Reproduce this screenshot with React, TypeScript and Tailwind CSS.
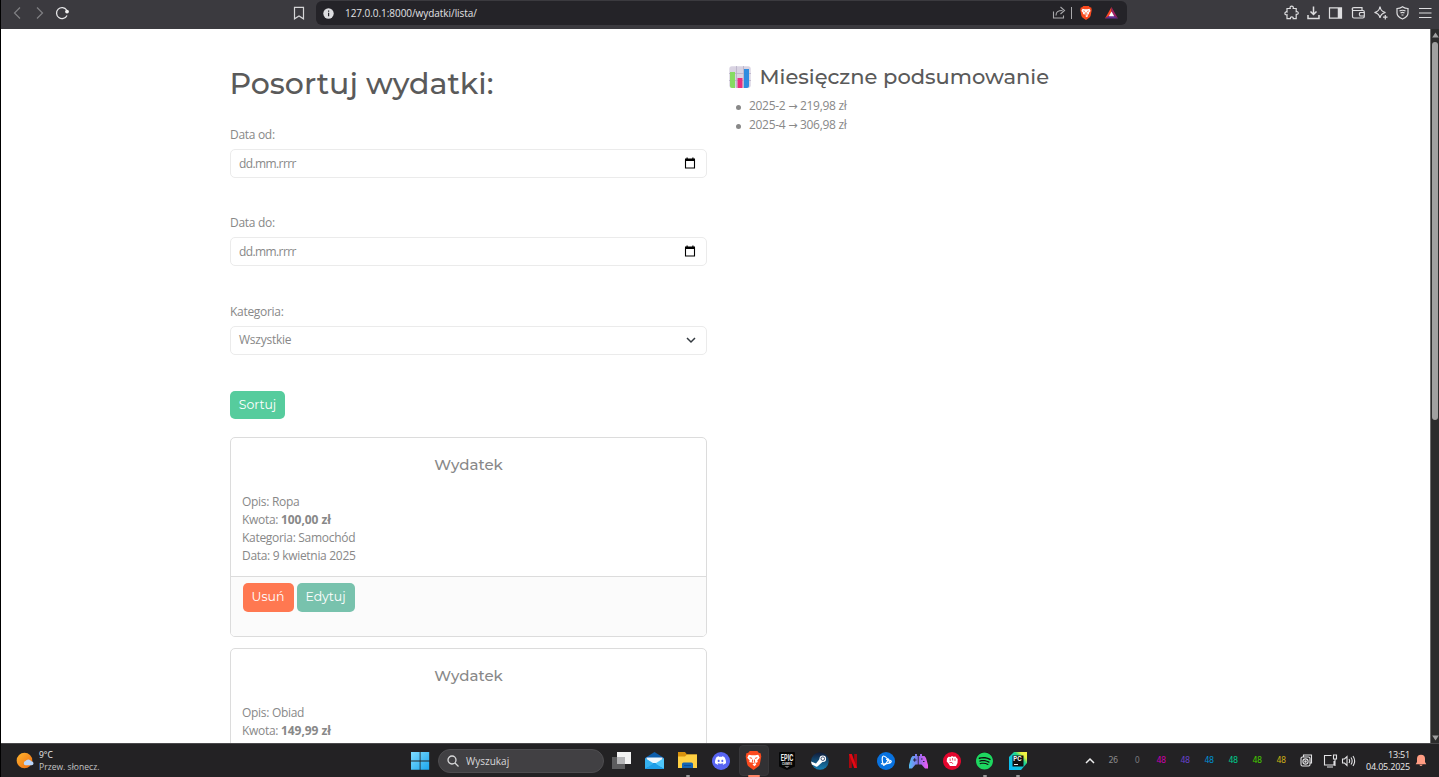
import React from "react";
import { SiDiscord, SiSpotify } from "react-icons/si";

const ui = "font-['Open_Sans','Noto_Sans',sans-serif]";
const head = "font-[Montserrat,Inter,sans-serif]";

function DateField({ label }: { label: string }) {
  return (
    <div className="flex flex-col">
      <label className="h-[18px] leading-[19px]">{label}</label>
      <div className="mt-[6px] mb-[35.4px] flex h-[29px] items-center justify-between rounded-[5px] border border-[#ebebeb] pr-[10px] pl-[8px]">
        <span className="pt-px leading-[18px] tracking-[-0.6px]">dd.mm.rrrr</span>
        <svg width="12" height="13" viewBox="0 0 12 13">
          <path d="M1.500 3h9v8h-9z" fill="none" stroke="#000" strokeWidth="1.100" />
          <path d="M1 1.500h10V4H1zM2.500.5h1.200V2H2.500zM8.300.5h1.200V2H8.300z" fill="#000" />
        </svg>
      </div>
    </div>
  );
}

type Expense = { opis: string; kwota: string; kategoria: string; data: string };

function Card({ e }: { e: Expense }) {
  return (
    <section className="mb-[11px] flex h-[200px] shrink-0 flex-col overflow-hidden rounded-[5px] border border-[#dcdcdc]">
      <h5 className={`${head} mt-[18px] text-center text-[15px] leading-[18px] font-medium tracking-normal`}>Wydatek</h5>
      <div className="mt-[19px] flex h-[83px] shrink-0 flex-col px-[11px] leading-[18px]">
        <p>Opis: {e.opis}</p>
        <p>Kwota: <b className="tracking-[-0.05px]">{e.kwota}</b></p>
        <p>Kategoria: {e.kategoria}</p>
        <p>Data: {e.data}</p>
      </div>
      <footer className="flex grow gap-[3px] border-t border-[#dcdcdc] bg-[#fbfbfb] pt-[6px] pl-[11.5px]">
        <button className={`${head} h-[29px] w-[51px] rounded-[5px] bg-[#ff7851] pb-px text-[12.5px] tracking-normal text-white`}>Usuń</button>
        <button className={`${head} h-[29px] w-[58px] rounded-[5px] bg-[#78c2ad] pb-px text-[12.5px] tracking-[-0.05px] text-white`}>Edytuj</button>
      </footer>
    </section>
  );
}

function BraveLion({ size, className = "" }: { size: number; className?: string }) {
  return (
    <svg className={className} width={size} height={size} viewBox="0 0 20 20">
      <path d="M6 0h8l1.500 1.800L17.500 2.300l.7 3.400-1.500 8q-.5 2-2 3L10 20l-4.700-3.300q-1.500-1-2-3L1.800 5.700l.7-3.400 2-.5z" fill="#fb4a1e" />
      <path d="m5 4 3 .5h4l3-.5 1.500 3-2.500 3 .5 1.500-2.500 1.500 1 1.300-2 1.700-2-1.700 1-1.300L5.500 11.500 6 10 3.500 7z" fill="#fff" />
      <path d="m6 7 2.500.8M14 7l-2.500.8M9 9v2.500M11 9v2.500M8 12l2 1 2-1" fill="none" stroke="#fb4a1e" strokeWidth="1" />
    </svg>
  );
}

function TopBar() {
  return (
    <header className="flex h-[29px] shrink-0 items-start bg-[#3b3a3f] text-[#dcdcde]">
      <div className="flex w-[315px] shrink-0 items-center pt-[5px] pl-[9px]">
        <svg width="60" height="16" viewBox="0 0 60 16" fill="none">
          <path d="m10 2.500-5.500 5.500 5.500 5.500M27 2.500 32.500 8 27 13.500" stroke="#808084" strokeWidth="1.200" />
          <path d="M57 10.500a5.500 5.500 0 1 1-.4-5.500" stroke="#e6e6e8" strokeWidth="1.300" />
          <circle cx="57" cy="6.600" r="1.900" fill="#f2f2f2" />
        </svg>
        <svg className="ml-[223px]" width="12" height="16" viewBox="0 0 12 16" fill="none">
          <path d="M1.500 2.300h9v11.500L6 11l-4.500 2.800z" stroke="#d5d5d7" strokeWidth="1.200" />
        </svg>
      </div>
      <div className="mt-px flex h-[24px] w-[811px] shrink-0 items-center rounded-[6px] bg-[#242328] pl-[7px]">
        <svg width="11" height="11" viewBox="0 0 11 11">
          <circle cx="5.500" cy="5.500" r="5.200" fill="#dddde0" />
          <path d="M5 2.500h1.200v1.300H5zM5 4.700h1.200v3.600H5z" fill="#242328" />
        </svg>
        <span className={`${ui} ml-[11px] w-[707px] shrink-0 text-[10px] tracking-[-0.05px] text-[#e2e2e4]`}>127.0.0.1:8000/wydatki/lista/</span>
        <svg width="22" height="16" viewBox="0 0 22 16" fill="none">
          <path d="M1.500 6.500v6.500h10v-2.500M4 10.500c0-3.500 2-5 6.500-5M8.500 2l4 3.500-4 3.500" stroke="#a9a9ac" strokeWidth="1.100" />
          <path d="M19.500 2v12" stroke="#a9a9ac" />
        </svg>
        <BraveLion className="ml-[5px]" size={14} />
        <svg className="ml-[12px]" width="13" height="12" viewBox="0 0 13 12">
          <path d="M6.500 0 0 11.500l6.500-4z" fill="#ff4724" />
          <path d="m6.500 0 6.500 11.500-6.500-4z" fill="#9e1f63" />
          <path d="M0 11.500h13L6.500 7z" fill="#662d91" />
          <path d="m6.500 4.500 2.700 4.700H3.800z" fill="#fff" />
        </svg>
      </div>
      <svg className="mt-[5px] ml-[157px] shrink-0" width="152" height="16" viewBox="0 0 152 16" fill="none" stroke="#dedee0" strokeWidth="1.200">
        <path d="M3 3.500h3.200c-1-3.300 4-3.300 3 0h3v3.200c2.700-.8 2.700 3.300 0 2.700v4.200H9.200c.5-2.400-3.200-2.400-2.800 0H3V9.800c-2.800.7-2.800-3.500 0-2.800z" />
        <path d="M29.500 1.500v8M26.500 6.500l3 3 3-3M24 10v3.400h11V10" strokeWidth="1.500" />
        <path d="M45.500 2.800h12v10.400h-12z" /><path d="M55.500 3v10" strokeWidth="3.500" />
        <path d="M79 5.500h-9c-2.500 0-2.500-2.800 0-2.800h8v2.500M68.500 4v7.500q0 1.500 1.500 1.500h8.800q1.500 0 1.500-1.500V7q0-1.500-1.300-1.500M80.500 7.500H76q-1.500 1.700 0 3.500h4.500" />
        <path d="M96 1.500q.7 5 5.500 6-4.800 1-5.500 5.500-.7-4.500-5.500-5.500 4.800-1 5.500-6z" /><path d="M101.300 10v4.500M99 12.200h4.500" />
        <path d="M118.500 1.700q2.500 1.800 5.500 1.800v4.500q0 3.800-5.500 6-5.500-2.200-5.500-6V3.500q3 0 5.500-1.800zM115.500 6q3-1.500 6 0M116.500 8q2-1.200 4 0M117.500 10h2" />
        <path d="M135 3.500h12.500M135 8h12.500M135 12.500h12.500" />
      </svg>
    </header>
  );
}

function Slot({ children, dot }: { children: React.ReactNode; dot?: boolean }) {
  return (
    <div className="relative flex h-[34px] w-[33px] shrink-0 items-center justify-center">
      {children}
      {dot && <i className="absolute bottom-[1px] h-[2px] w-[4px] rounded-full bg-[#999]" />}
    </div>
  );
}

const counters = [
  ["26", "text-[#89898b]"], ["0", "text-[#77777a]"], ["48", "text-[#c800a8]"], ["48", "text-[#6541c8]"],
  ["48", "text-[#008fd0]"], ["48", "text-[#00c98a]"], ["48", "text-[#46c800]"], ["48", "text-[#c9ad16]"],
];

function TaskBar() {
  return (
    <footer className={`${ui} flex h-[34px] shrink-0 items-center border-t border-[#4a494b] bg-[#232224] text-[#ececec]`}>
      <div className="flex w-[410px] shrink-0 items-center pl-[15px]">
        <svg width="19" height="18" viewBox="0 0 19 18">
          <defs><linearGradient id="sun" x2="1" y2="1"><stop stopColor="#ffb52e" /><stop offset="1" stopColor="#ee6b12" /></linearGradient></defs>
          <circle cx="8.500" cy="8.500" r="7.800" fill="url(#sun)" />
          <path d="M9.500 13.300a2.200 2.200 0 0 1 0-4.300 3.200 3.200 0 0 1 5.700.3 2 2 0 0 1 .5 4z" fill="#bcd6fa" />
        </svg>
        <div className="ml-[4px] flex flex-col pt-[1px] text-[8.5px] leading-[12px]">
          <span>9°C</span>
          <span className="tracking-[0.03px] text-[#c4c4c6]">Przew. słonecz.</span>
        </div>
      </div>
      <svg width="19" height="18" viewBox="0 0 19 18">
        <defs><linearGradient id="win" x2="1" y2="1"><stop stopColor="#7fdcff" /><stop offset="1" stopColor="#1aa5ee" /></linearGradient></defs>
        <path d="M0 0h8.700v8.500H0zM9.500 0h8.700v8.500H9.500zM0 9.400h8.700v8.400H0zM9.500 9.400h8.700v8.400H9.500z" fill="url(#win)" />
      </svg>
      <div className="ml-[8px] flex h-[24px] w-[166px] items-center rounded-full border border-[#4e4d50] bg-[#414043] pl-[8px] text-[10px]">
        <svg width="12" height="12" viewBox="0 0 12 12" fill="none" stroke="#d8d8da" strokeWidth="1.300"><circle cx="5" cy="5" r="4" /><path d="m8 8 3.500 3.500" /></svg>
        <span className="ml-[7px] pt-px text-[#d8d8da]">Wyszukaj</span>
      </div>
      <div className="ml-[1px] flex">
        <Slot>
          <svg width="19" height="17" viewBox="0 0 19 17"><path d="M0 5h13v12H0z" fill="#5d5d5f" /><path d="M5 0h14v12H5z" fill="#f2f2f2" /><path d="M5 5h8v7H5z" fill="#b5b5b7" /></svg>
        </Slot>
        <Slot>
          <svg width="19" height="17" viewBox="0 0 19 17"><path d="M0 6 9.500 0 19 6v11H0z" fill="#0b5cab" /><path d="M1.500 5.500h16V11h-16z" fill="#eef6fd" /><path d="m0 6 9.500 6L0 17z" fill="#35b1ef" /><path d="m19 6-9.500 6 9.500 5z" fill="#4fc7fa" /><path d="m0 17 9.500-6 9.500 6z" fill="#1f9ee8" /></svg>
        </Slot>
        <Slot dot>
          <svg width="19" height="17" viewBox="0 0 19 17"><path d="M0 0h7l2 2.500h10V16H0z" fill="#d9920e" /><path d="M0 4.500h7l2-2h10V16H0z" fill="#ffd043" /><path d="M4 16v-4q0-1.500 1.500-1.500h8Q15 10.500 15 12v4z" fill="#1565b5" /><path d="M6 13.500h7" stroke="#0c4d94" /></svg>
        </Slot>
        <Slot><div className="flex size-[18px] items-center justify-center rounded-full bg-[#5865f2]"><SiDiscord size={11} color="#fff" /></div></Slot>
        <div className="relative flex h-[34px] w-[33px] items-center justify-center">
          <div className="flex h-[31px] w-[30px] items-center justify-center rounded-[4px] border border-[#39383b] bg-[#323134]"><BraveLion size={19} /></div>
          <i className="absolute bottom-[1px] h-[2px] w-[12px] rounded-full bg-[#ff8466]" />
        </div>
        <Slot>
          <svg width="16" height="18" viewBox="0 0 16 18">
            <path d="M1 0h14q1 0 1 1v13.500L8 18l-8-3.500V1q0-1 1-1z" fill="#060606" />
            <text x="1.700" y="8.700" fontSize="8.500" fontWeight="700" fill="#eee" textLength="12.600" lengthAdjust="spacingAndGlyphs" fontFamily="Inter">EPIC</text>
            <text x="3" y="12.800" fontSize="3" fontWeight="700" fill="#ddd" textLength="10" lengthAdjust="spacingAndGlyphs" fontFamily="Inter">GAMES</text>
            <path d="m5.500 14.500 2.500 1 2.500-1z" fill="#ddd" />
          </svg>
        </Slot>
        <Slot>
          <svg width="18" height="18" viewBox="0 0 18 18">
            <defs><linearGradient id="steam" y2="1" x2="0"><stop stopColor="#111b38" /><stop offset="1" stopColor="#1580b5" /></linearGradient></defs>
            <circle cx="9" cy="9" r="8.700" fill="url(#steam)" />
            <path d="m0 9.500 5 2 4-5 3 3-5 4.500q-1.500 1.500-3 0L.8 12.500z" fill="#fff" /><circle cx="11.800" cy="6.700" r="3.300" fill="#fff" /><circle cx="11.800" cy="6.700" r="1.800" fill="none" stroke="#18305a" strokeWidth=".8" />
          </svg>
        </Slot>
        <Slot><svg width="8" height="14" viewBox="0 0 8 14"><path d="M0 0h2.800v14H0zM5.200 0H8v14H5.200z" fill="#a9070f" /><path d="M0 0h2.800L8 14H5.200z" fill="#e50914" /></svg></Slot>
        <Slot>
          <svg width="18" height="18" viewBox="0 0 18 18">
            <circle cx="9" cy="9" r="9" fill="#0872df" />
            <g fill="none" stroke="#fff" strokeWidth="1.200"><path d="M7 13.500c-2-2-2.500-9.500-.5-9.500 2 0 6 4.500 6.500 7.500" /><path d="M4 11.500c1.500 1 8 .5 10-1.500 1-1.500-2.500-2.500-5-2.500" /><path d="M11.500 6.500c-.5 2.500-3 6-5 7" /></g>
          </svg>
        </Slot>
        <Slot>
          <svg width="19" height="16" viewBox="0 0 19 16">
            <defs><linearGradient id="pad"><stop stopColor="#52bdf0" /><stop offset=".5" stopColor="#8a6df0" /><stop offset="1" stopColor="#f05af0" /></linearGradient></defs>
            <path d="M3.500 3h2.500V1h2v2h.8v8.500H6.500L3 15.500H0V12L2 5zM9.600 3h1.400V1h2v2h2.500L17 5l2 7v3.500h-3l-3.500-4H9.600z" fill="url(#pad)" /><path d="M4 7h3.500M5.700 5.200v3.500M12 6h1.500M14 8.500h1.500" stroke="#27243f" />
          </svg>
        </Slot>
        <Slot>
          <svg width="18" height="18" viewBox="0 0 18 18"><circle cx="9" cy="9" r="9" fill="#e4062e" /><path d="m4 6.500 1.500-1.700 2 .2L9 4l1.500.8L12.500 4.500 13.700 6l1 1-.2 4L13 14H7L5.500 11.500 3.700 9.500z" fill="#fff" /><path d="m7 6.500.3 2.500M9.500 6l.2 2.500M12 6.500V9M6.500 10.500h2.500l1 1.500" stroke="#e4062e" strokeWidth=".7" fill="none" /></svg>
        </Slot>
        <Slot dot><div className="flex size-[17px] items-center justify-center rounded-full bg-[#101010]"><SiSpotify size={18} color="#1ed760" /></div></Slot>
        <Slot dot>
          <svg width="18" height="18" viewBox="0 0 18 18">
            <defs><linearGradient id="pc" x1="0" y1="1" x2="1" y2="0"><stop stopColor="#08b8ff" /><stop offset=".45" stopColor="#12c8d0" /><stop offset=".65" stopColor="#21d789" /><stop offset=".8" stopColor="#e6f040" /><stop offset="1" stopColor="#fcf84a" /></linearGradient></defs>
            <path d="M5 0h13v11l-6 7H0V5z" fill="url(#pc)" /><path d="M3.500 3.500h11v11h-11z" fill="#111" />
            <text x="4.300" y="9.200" fontSize="6" fontWeight="700" fill="#fff" fontFamily="Inter">PC</text><path d="M5 12.500h4" stroke="#fff" strokeWidth=".9" />
          </svg>
        </Slot>
      </div>
      <svg className="ml-[51px]" width="10" height="8" viewBox="0 0 10 8"><path d="m1 6 4-4 4 4" fill="none" stroke="#eee" strokeWidth="1.500" /></svg>
      <div className="ml-[6px] flex pt-px text-[8px]">
        {counters.map(([v, c], i) => (
          <span key={i} className={`${c} w-[24px] text-center font-['DejaVu_Sans'] text-[8px] tracking-[-0.5px]`}>{v}</span>
        ))}
      </div>
      <svg className="ml-[7px]" width="56" height="14" viewBox="0 0 56 14" fill="none" stroke="#e3e3e5" strokeWidth="1.100">
        <path d="M3.500 3V1h8v8H10" /><rect x="1" y="3" width="9" height="9" rx="1.500" /><circle cx="5.500" cy="7.500" r="2.600" /><circle cx="5.500" cy="7.500" r=".7" />
        <path d="M31.500 1.500H24.500v9.500h9.500V7M27 13h6M33.500 1h3v4h-3zM35 5v7" />
        <path d="M42.500 5h2L47 2.500v9L44.500 9h-2zM49 5q1.300 2 0 4M51 3.500q2.300 3.500 0 7M53 2q3.300 5 0 10" />
      </svg>
      <div className="ml-auto flex items-center pr-[12px]">
        <div className="flex flex-col items-end pt-px text-[9px] leading-[12px] tracking-[-0.2px]"><span>13:51</span><span>04.05.2025</span></div>
        <svg className="ml-[5px]" width="12" height="13" viewBox="0 0 12 13"><path d="M6 .8a4 4 0 0 1 4 4V8l1.300 2.200H.7L2 8V4.800a4 4 0 0 1 4-4zM4.300 10.800h3.400Q6 13.200 4.300 10.800z" fill="#ff9d83" /></svg>
      </div>
    </footer>
  );
}

const months = [
  { month: "2025-2", total: "219,98 zł" },
  { month: "2025-4", total: "306,98 zł" },
];

export default function App() {
  return (
    <div className="flex h-[777px] w-[1439px] flex-col overflow-hidden border-l border-black bg-white">
      <TopBar />
      <div className="flex h-[714px] shrink-0">
        <main className={`${ui} flex grow overflow-hidden pl-[229px] text-[12px] tracking-[-0.3px] text-[#888]`}>
          <div className="flex w-[477px] shrink-0 flex-col">
            <h1 className={`${head} mt-[36px] mb-[24px] -ml-[0.5px] h-[36px] text-[30px] leading-[37px] font-medium tracking-normal whitespace-nowrap text-[#5a5a5a]`}>Posortuj wydatki:</h1>
            <DateField label="Data od:" />
            <DateField label="Data do:" />
            <label className="h-[18px] leading-[19px]">Kategoria:</label>
            <div className="mt-[6.2px] flex h-[29px] shrink-0 items-center justify-between rounded-[5px] border border-[#ebebeb] pr-[10px] pl-[8px]">
              <span className="tracking-[-0.25px]">Wszystkie</span>
              <svg width="10" height="8" viewBox="0 0 10 8"><path d="m1 2 4 4 4-4" fill="none" stroke="#343a40" strokeWidth="1.500" /></svg>
            </div>
            <button className={`${head} mt-[36px] mb-[18px] h-[28px] w-[55px] shrink-0 rounded-[5px] bg-[#56cc9d] text-[12.5px] tracking-[-0.05px] text-white`}>Sortuj</button>
            <Card e={{ opis: "Ropa", kwota: "100,00 zł", kategoria: "Samochód", data: "9 kwietnia 2025" }} />
            <Card e={{ opis: "Obiad", kwota: "149,99 zł", kategoria: "Jedzenie", data: "9 kwietnia 2025" }} />
          </div>
          <div className="ml-[21.5px] flex flex-col pt-[36px]">
            <h3 className={`${head} flex h-[24px] items-center text-[21px] leading-[24px] font-medium tracking-normal text-[#5a5a5a]`}>
              <svg className="mr-[9px]" width="22" height="22" viewBox="0 0 22 22">
                <rect x=".3" y=".3" width="21.400" height="21.400" rx="2.500" fill="#d9d3e2" /><path d="M7.500 0v22M14.500 0v22M0 7.500h22M0 14.500h22" stroke="#b8b0c6" strokeWidth=".8" />
                <path d="M1 6h5v16H3q-2 0-2-2z" fill="#86dc62" /><path d="M8.500 12h5v10h-5z" fill="#e8307d" /><path d="M15 3h5v17q0 2-2 2h-3z" fill="#2e8ce0" />
              </svg>
              <span className="whitespace-nowrap">Miesięczne podsumowanie</span>
            </h3>
            <ul className="mt-[8px] flex flex-col pl-[7px] leading-[18px]">
              {months.map(({ month, total }) => (
                <li key={month} className="flex items-center gap-[8.5px]">
                  <i className="mt-px size-[5px] rounded-full bg-[#888]" />
                  <span>{month} <span className="font-['DejaVu_Sans'] text-[11px]">→</span> {total}</span>
                </li>
              ))}
            </ul>
          </div>
        </main>
        <aside className="flex w-[9px] shrink-0 flex-col items-center border-l border-[#6c6c6c] bg-[#2c2c2c]">
          <svg width="7" height="13" viewBox="0 0 7 13"><path d="m3.500 3.500 3.300 5H.2z" fill="#a0a0a0" /></svg>
          <div className="h-[378px] w-[6px] rounded-full bg-[#a0a0a0]" />
          <svg className="mt-auto" width="7" height="10" viewBox="0 0 7 10"><path d="m3.500 7.500 3.300-5H.2z" fill="#a0a0a0" /></svg>
        </aside>
      </div>
      <TaskBar />
    </div>
  );
}
